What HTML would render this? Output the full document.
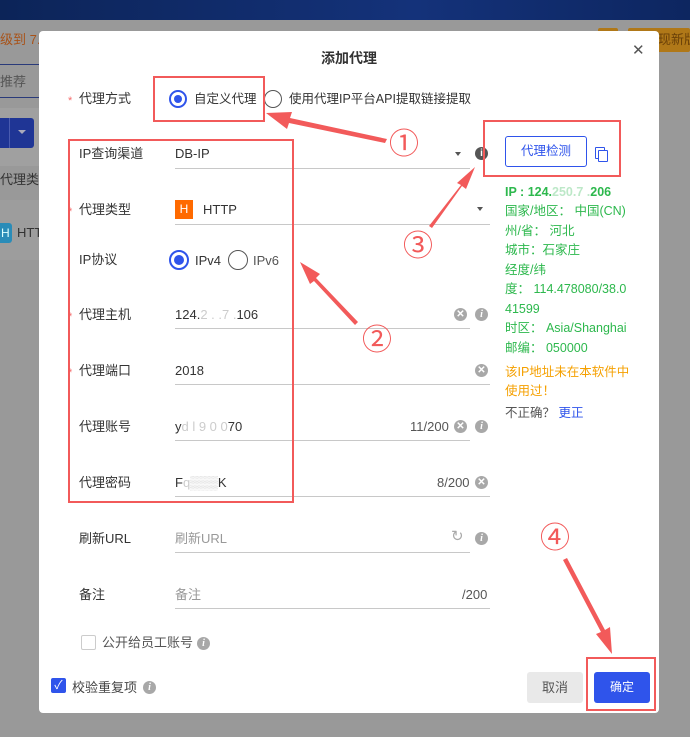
<!DOCTYPE html>
<html><head><meta charset="utf-8"><style>
*{margin:0;padding:0;box-sizing:border-box}
body{width:690px;height:737px;overflow:hidden;background:#999;font-family:"Liberation Sans","Noto Sans CJK SC",sans-serif;font-size:13px;color:#333;position:relative;line-height:16px}
.a{position:absolute;white-space:nowrap}
.modal{position:absolute;left:39px;top:31px;width:620px;height:682px;background:#fff;border-radius:4px}
.lbl{position:absolute;left:40px;font-size:13px;color:#333}
.star{position:absolute;left:29px;color:#f56c6c;font-size:11px}
.line{position:absolute;height:1px;background:#c8c8c8}
.val{position:absolute;left:136px;font-size:13px;color:#333}
.ic{position:absolute;width:13px;height:13px;border-radius:50%;background:#a8a8a8;color:#fff;font-size:10px;font-weight:bold;font-style:italic;text-align:center;line-height:13px;font-family:"Liberation Serif",serif}
.x{position:absolute;width:13px;height:13px;border-radius:50%;background:#a8a8a8;color:#fff;font-size:10px;text-align:center;line-height:13px;font-weight:bold}
.red{position:absolute;border:2px solid #f25a5a}
.g{color:#2db84d;font-size:12.5px;line-height:19.5px}
</style></head><body>
<div class="a" style="left:0;top:0;width:690px;height:20px;background:linear-gradient(90deg,#0c2458,#14327a 60%,#0d2660)"></div>
<div class="a" style="left:0;top:32px;font-size:13px;color:#a85218">级到 7.1</div>
<div class="a" style="left:598px;top:28px;width:20px;height:22px;background:#b07818;border-radius:2px"></div>
<div class="a" style="left:628px;top:28px;width:62px;height:24px;background:#b07818;border-radius:2px;color:#6a4008;font-size:13px;padding:4px 0 0 30px">现新版</div>
<div class="a" style="left:0;top:64px;width:40px;height:34px;border-top:1px solid #2a3a7a;border-bottom:1px solid #2a3a7a;color:#555;padding-top:9px">推荐</div>
<div class="a" style="left:0;top:108px;width:100px;height:58px;background:#a0a0a0"></div>
<div class="a" style="left:0;top:118px;width:34px;height:30px;background:#1f3595;border-radius:0 3px 3px 0"></div>
<div class="a" style="left:9px;top:118px;width:1px;height:30px;background:#4a5cb0"></div>
<div class="a" style="left:18px;top:130px;border:4px solid transparent;border-top:4px solid #aab"></div>
<div class="a" style="left:0;top:172px;color:#333">代理类型</div>
<div class="a" style="left:0;top:200px;width:100px;height:60px;background:#9d9d9d"></div>
<div class="a" style="left:0;top:223px;width:12px;height:20px;background:#2a8cb8;color:#dff;font-size:12px;padding:2px 0 0 1px;border-radius:0 3px 3px 0">H</div>
<div class="a" style="left:17px;top:225px;color:#333">HTT</div>

<div class="modal">
 <div class="a" style="left:0;width:620px;top:19px;text-align:center;font-size:14px;font-weight:bold;color:#333">添加代理</div>
 <div class="a" style="left:593px;top:12px;font-size:15px;color:#555">✕</div>

 <div class="star" style="top:62px">*</div><div class="lbl" style="top:60px">代理方式</div>
 <div class="a" style="left:130px;top:59px;width:18px;height:18px;border:2px solid #2f54eb;border-radius:50%"><div style="margin:3px;width:8px;height:8px;border-radius:50%;background:#2f54eb"></div></div>
 <div class="a" style="left:155px;top:60px;color:#333;font-size:12.5px">自定义代理</div>
 <div class="a" style="left:225px;top:59px;width:18px;height:18px;border:1.5px solid #555;border-radius:50%"></div>
 <div class="a" style="left:250px;top:60px;color:#333;font-size:12.5px">使用代理IP平台API提取链接提取</div>

 <div class="lbl" style="top:115px">IP查询渠道</div><div class="val" style="top:115px">DB-IP</div>
 <div class="a" style="left:416px;top:121px;border:3px solid transparent;border-top:4px solid #555"></div>
 <div class="line" style="left:136px;top:137px;width:295px"></div>
 <div class="ic" style="left:436px;top:116px;background:#555;font-style:normal;font-family:'Liberation Sans'">i</div>

 <div class="star" style="top:173px">*</div><div class="lbl" style="top:171px">代理类型</div>
 <div class="a" style="left:136px;top:169px;width:18px;height:19px;background:#ff6a00;color:#fff;font-size:12px;text-align:center;line-height:19px">H</div>
 <div class="val" style="left:164px;top:171px">HTTP</div>
 <div class="a" style="left:438px;top:176px;border:3px solid transparent;border-top:4px solid #555"></div>
 <div class="line" style="left:136px;top:193px;width:315px"></div>

 <div class="lbl" style="top:221px">IP协议</div>
 <div class="a" style="left:130px;top:219px;width:20px;height:20px;border:2px solid #2f54eb;border-radius:50%"><div style="margin:3px;width:10px;height:10px;border-radius:50%;background:#2f54eb"></div></div>
 <div class="a" style="left:156px;top:222px">IPv4</div>
 <div class="a" style="left:189px;top:219px;width:20px;height:20px;border:1.5px solid #555;border-radius:50%"></div>
 <div class="a" style="left:214px;top:222px;color:#555">IPv6</div>

 <div class="star" style="top:278px">*</div><div class="lbl" style="top:276px">代理主机</div><div class="val" style="top:276px">124.<span style="color:#ccc">2 . .7 .</span>106</div>
 <div class="line" style="left:136px;top:297px;width:295px"></div>
 <div class="x" style="left:415px;top:277px">✕</div><div class="ic" style="left:436px;top:277px">i</div>

 <div class="star" style="top:334px">*</div><div class="lbl" style="top:332px">代理端口</div><div class="val" style="top:332px">2018</div>
 <div class="line" style="left:136px;top:353px;width:315px"></div>
 <div class="x" style="left:436px;top:333px">✕</div>

 <div class="lbl" style="top:388px">代理账号</div><div class="val" style="top:388px">y<span style="color:#ccc">d l 9 0 0</span>70</div>
 <div class="a" style="left:371px;top:388px;color:#555">11/200</div>
 <div class="line" style="left:136px;top:409px;width:295px"></div>
 <div class="x" style="left:415px;top:389px">✕</div><div class="ic" style="left:436px;top:389px">i</div>

 <div class="lbl" style="top:444px">代理密码</div><div class="val" style="top:444px">F<span style="color:#ccc">q▒▒▒</span>K</div>
 <div class="a" style="left:398px;top:444px;color:#555">8/200</div>
 <div class="line" style="left:136px;top:465px;width:315px"></div>
 <div class="x" style="left:436px;top:445px">✕</div>

 <div class="lbl" style="top:500px">刷新URL</div><div class="val" style="top:500px;color:#999">刷新URL</div>
 <div class="a" style="left:412px;top:498px;color:#aaa;font-size:15px">↻</div>
 <div class="line" style="left:136px;top:521px;width:295px"></div>
 <div class="ic" style="left:436px;top:501px">i</div>

 <div class="lbl" style="top:556px">备注</div><div class="val" style="top:556px;color:#999">备注</div>
 <div class="a" style="left:423px;top:556px;color:#555">/200</div>
 <div class="line" style="left:136px;top:577px;width:315px"></div>

 <div class="a" style="left:42px;top:604px;width:15px;height:15px;border:1px solid #ccc;border-radius:2px"></div>
 <div class="a" style="left:63px;top:604px;color:#555">公开给员工账号</div>
 <div class="ic" style="left:158px;top:606px">i</div>

 <div class="a" style="left:12px;top:647px;width:15px;height:15px;background:#2f54eb;border-radius:2px;color:#fff;font-size:12px;text-align:center;line-height:15px">✓</div>
 <div class="a" style="left:33px;top:649px;color:#444">校验重复项</div>
 <div class="ic" style="left:104px;top:650px">i</div>

 <div class="a" style="left:488px;top:641px;width:56px;height:31px;background:#e9e9e9;border-radius:3px;text-align:center;line-height:31px;color:#555">取消</div>
 <div class="a" style="left:555px;top:641px;width:56px;height:31px;background:#2f54eb;border-radius:3px;text-align:center;line-height:31px;color:#fff;font-size:12px">确定</div>

 <div class="a" style="left:466px;top:105px;width:82px;height:31px;border:1px solid #2f54eb;border-radius:3px;text-align:center;line-height:29px;color:#2f54eb;font-size:12.5px">代理检测</div>
 <div class="a" style="left:556px;top:116px;width:10px;height:12px;border:1.5px solid #2f54eb;border-radius:1px;background:#fff"></div>
 <div class="a" style="left:559px;top:119px;width:10px;height:12px;border:1.5px solid #2f54eb;border-radius:1px;background:#fff"></div>

 <div class="a g" style="left:466px;top:152px;font-weight:bold">IP : 124.<span style="color:#bde8c8">250.7 .</span>206</div>
 <div class="a g" style="left:466px;top:171px">国家/地区： 中国(CN)<br>州/省： 河北<br>城市：石家庄<br>经度/纬<br>度： 114.478080/38.0<br>41599<br>时区： Asia/Shanghai<br>邮编： 050000</div>
 <div class="a" style="left:466px;top:332px;color:#f5a000;font-size:12.5px;line-height:19px">该IP地址未在本软件中<br>使用过！</div>
 <div class="a" style="left:466px;top:374px;color:#555;font-size:12.5px">不正确？ <span style="color:#2f54eb">更正</span></div>
</div>

<div class="red" style="left:153px;top:76px;width:112px;height:46px"></div>
<div class="red" style="left:68px;top:139px;width:226px;height:364px"></div>
<div class="red" style="left:483px;top:120px;width:138px;height:57px"></div>
<div class="red" style="left:586px;top:657px;width:70px;height:54px"></div>

<div class="a" style="left:389px;top:130px;font-size:30px;line-height:30px;color:#f25a5a">①</div>
<div class="a" style="left:362px;top:326px;font-size:30px;line-height:30px;color:#f25a5a">②</div>
<div class="a" style="left:403px;top:232px;font-size:30px;line-height:30px;color:#f25a5a">③</div>
<div class="a" style="left:540px;top:524px;font-size:30px;line-height:30px;color:#f25a5a">④</div>

<svg class="a" style="left:0;top:0" width="690" height="737">
 <g fill="#f25a5a">
  <polygon points="387,139 290,118 292,112 266,113 287,129 289,123 385,143"/>
  <polygon points="358,322 316,278 320,274 300,262 310,284 314,281 355,325"/>
  <polygon points="432,228 462,186 466,189 475,167 457,183 461,185 429,226"/>
  <polygon points="563,560 601,632 596,634 612,654 610,627 605,630 567,558"/>
 </g>
</svg>
</body></html>
